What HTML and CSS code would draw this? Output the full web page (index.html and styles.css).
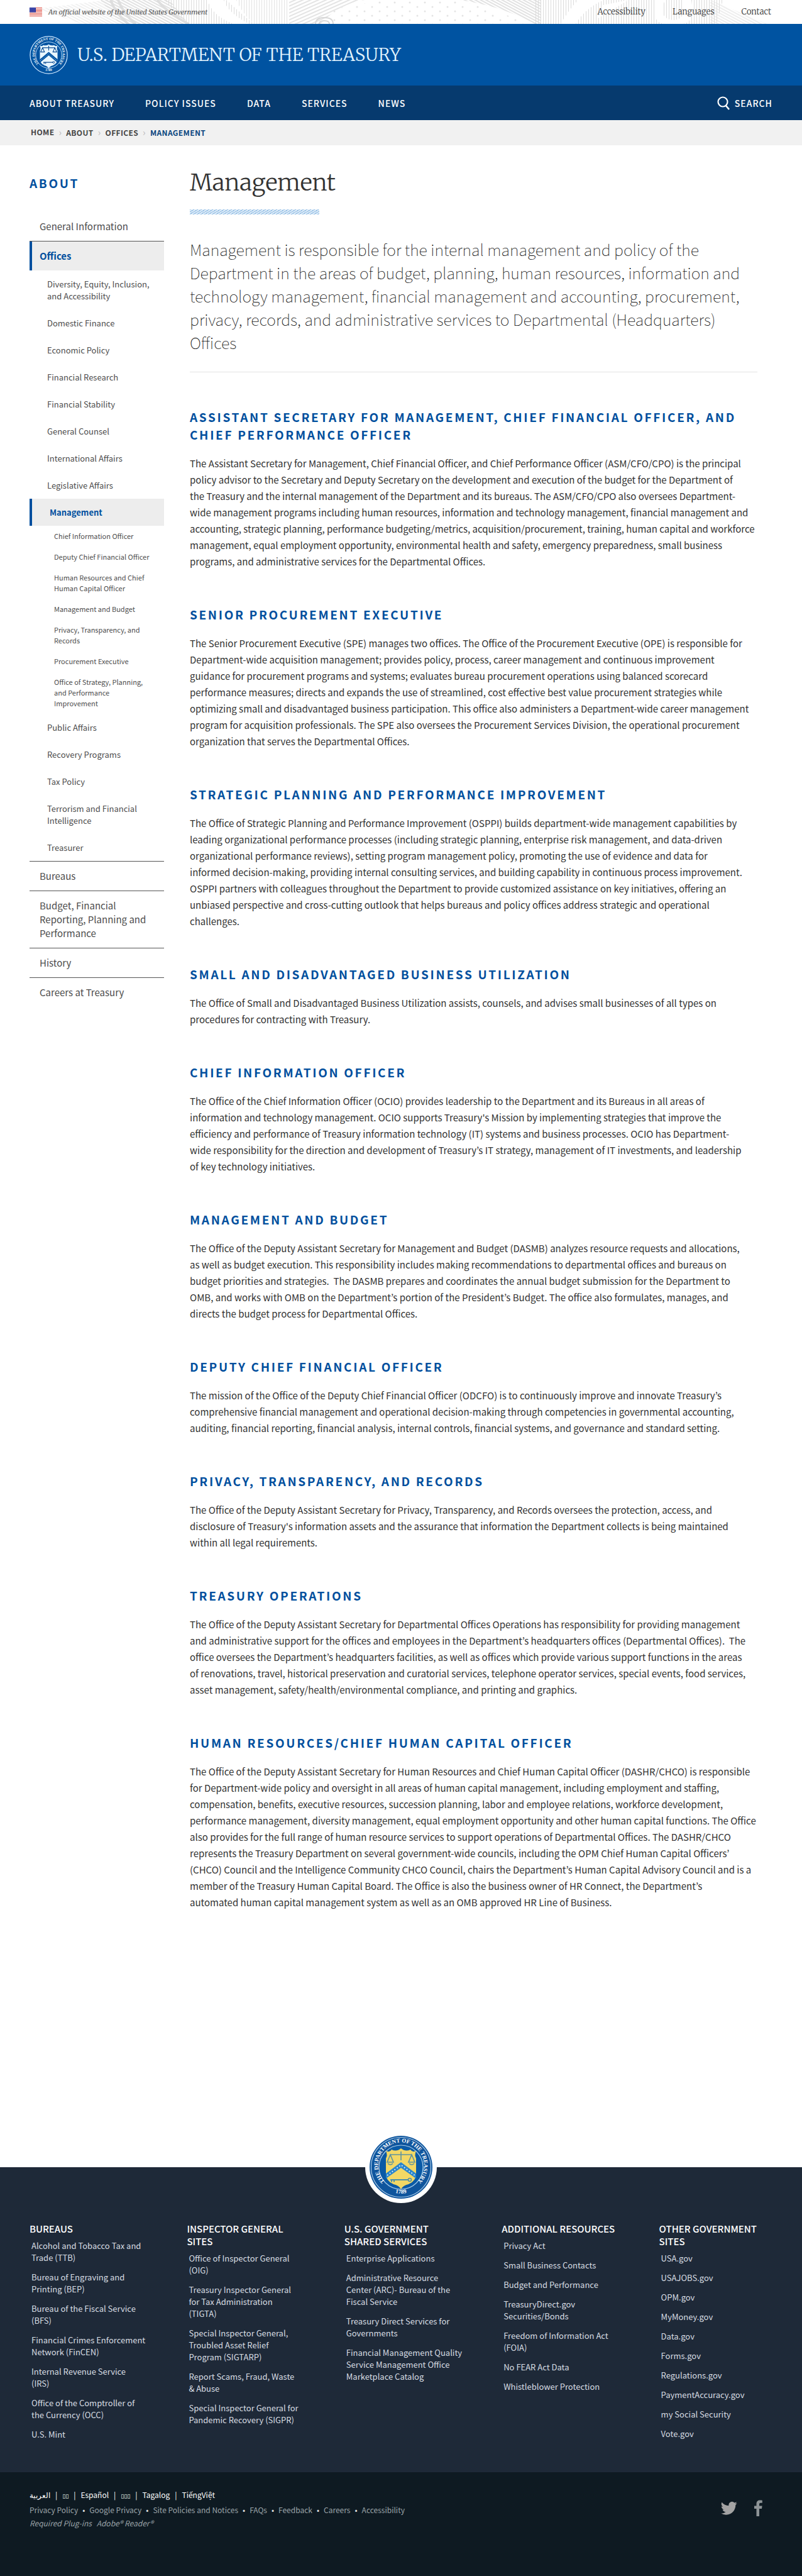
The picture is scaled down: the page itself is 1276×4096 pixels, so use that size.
FILE: index.html
```html
<!DOCTYPE html>
<html lang="en">
<head>
<meta charset="utf-8">
<meta name="viewport" content="width=device-width, initial-scale=1">
<title>Management | U.S. Department of the Treasury</title>
<link rel="stylesheet" href="styles.css">
</head>
<body>
<div class="banner">
  <svg class="banner-art" viewBox="0 0 1276 38" preserveAspectRatio="xMidYMid slice" aria-hidden="true">
    <defs>
      <pattern id="lines" width="4" height="4" patternUnits="userSpaceOnUse"><path d="M0 0v4" stroke="#dcdcdc" stroke-width="2"/></pattern>
      <pattern id="rows" width="4" height="4" patternUnits="userSpaceOnUse" patternTransform="rotate(28)"><path d="M0 1h4" stroke="#e2e2e2" stroke-width="2"/></pattern>
      <pattern id="rays" width="5" height="5" patternUnits="userSpaceOnUse" patternTransform="rotate(-24)"><path d="M0 1h5" stroke="#e4e4e4" stroke-width="2"/></pattern>
      <pattern id="dots" width="24" height="14" patternUnits="userSpaceOnUse"><circle cx="4" cy="4" r="1.5" fill="#e4e4e4"/><circle cx="16" cy="11" r="1.5" fill="#e4e4e4"/></pattern>
    </defs>
    <path d="M60 14L170 0H190V38H130Z" fill="url(#rows)" opacity=".5"/>
    <path d="M160 0H270L300 38H190Z" fill="url(#rows)"/>
    <path d="M176 0Q184 22 204 38M188 0Q196 22 216 38M250 0Q268 22 300 38" fill="none" stroke="#dedede" stroke-width="4"/>
    <path d="M262 0H360Q384 22 404 38H300Q276 20 262 0Z" fill="url(#lines)"/>
    <path d="M330 0Q338 26 372 38H396Q362 20 356 0Z" fill="#fff"/>
    <path d="M376 0H460V38H404Q384 20 376 0Z" fill="url(#lines)" opacity=".8"/>
    <path d="M460 0H580Q540 6 510 38H460Z" fill="url(#rays)"/>
    <path d="M502 38Q502 28 516 28T530 38M508 38Q508 33 516 33T524 38" fill="none" stroke="#d8d8d8" stroke-width="2"/>
    <path d="M530 14L610 0H730L850 38H520Z" fill="url(#dots)"/>
    <path d="M732 0H860V38H850Q800 10 732 0Z" fill="url(#rows)"/>
    <path d="M850 0H1150L1140 38H850Z" fill="url(#lines)"/>
    <path d="M920 0H960Q930 14 916 38H892Q906 14 920 0ZM960 8L1000 0L950 30ZM1058 0Q1046 30 1072 32Q1094 30 1086 0H1100Q1106 38 1084 38H1060Q1034 38 1044 0Z" fill="#fff"/>
    <path d="M1130 0L1220 38H1130Z" fill="url(#rows)" opacity=".6"/>
  </svg>
  <div class="wrap banner-row">
    <p class="official">
      <svg class="flag" viewBox="0 0 20 14" aria-hidden="true"><path fill="#fff" d="M0 0h20v14H0z"/><path stroke="#e0564a" stroke-width="1.1" d="M0 .5h20M0 2.7h20M0 4.9h20M0 7h20M0 9.2h20M0 11.3h20M0 13.5h20"/><path fill="#25319b" d="M0 0h10v7.6H0z"/><path stroke="#aab0e8" stroke-width=".8" stroke-dasharray="1 1.2" d="M1 1.6h8.5M1 3.8h8.5M1 6h8.5"/></svg>
      An official website of the United States Government
    </p>
    <nav class="utility" aria-label="Utility">
      <a href="#">Accessibility</a><a href="#">Languages</a><a href="#">Contact</a>
    </nav>
  </div>
</div>
<header class="masthead">
  <div class="wrap masthead-row">
    <svg class="logo" viewBox="0 0 100 100" role="img" aria-label="Treasury seal">
      <circle cx="50" cy="50" r="48.5" fill="none" stroke="#cfe8ff" stroke-width="2"/>
      <circle cx="50" cy="50" r="34" fill="none" stroke="#cfe8ff" stroke-width="1.5"/>
      <path id="arc-a" d="M22.5 71A36.5 36.5 0 1 1 77.5 71" fill="none"/>
      <path id="arc-b" d="M25 84A43.5 43.5 0 0 0 75 84" fill="none"/>
      <text class="seal-text"><textPath href="#arc-a" startOffset="50%" text-anchor="middle">THE DEPARTMENT OF THE TREASURY</textPath></text>
      <text class="seal-text"><textPath href="#arc-b" startOffset="50%" text-anchor="middle">1789</textPath></text>
      <path fill="#e8f6ff" d="M27 26q6 2 9-2q7 3 14-2q7 5 14 2q3 4 9 2q-3 7 0 12v22q0 12-12 17q-8 2-11 8q-3-6-11-8q-12-5-12-17V38q3-5 0-12z"/>
      <path fill="none" stroke="#0a4a90" stroke-width="1.8" d="M50 26v12M34 31h32M34 31l-5 11h10zM66 31l-5 11h10z"/>
      <path fill="#0053a1" d="M27 61L50 42l23 19v9L50 51 27 70z"/>
      <path fill="none" stroke="#cfe8ff" stroke-width="1.6" stroke-dasharray="1.6 3" d="M28 65L50 47l22 18"/>
      <path fill="none" stroke="#0a4a90" stroke-width="2" d="M36 69h26M38 69v4M42 69v4"/><circle cx="63" cy="69" r="2.5" fill="none" stroke="#0a4a90" stroke-width="1.5"/>
    </svg>
    <a class="site-name" href="#">U.S. DEPARTMENT OF THE TREASURY</a>
  </div>
</header>
<div class="mainnav">
  <div class="wrap mainnav-row">
    <nav class="menu" aria-label="Main">
      <a href="#">ABOUT TREASURY</a><a href="#">POLICY ISSUES</a><a href="#">DATA</a><a href="#">SERVICES</a><a href="#">NEWS</a>
    </nav>
    <button class="search" type="button">
      <svg viewBox="0 0 20 22" aria-hidden="true"><circle cx="9" cy="9" r="7.5" fill="none" stroke="#fff" stroke-width="2.2"/><path d="M13.5 14.5l5.5 6.5" stroke="#fff" stroke-width="2.6"/></svg>
      SEARCH
    </button>
  </div>
</div>
<nav class="crumbs" aria-label="Breadcrumb">
  <ol class="wrap crumbs-row">
    <li><a href="#">HOME</a></li><li><a href="#">ABOUT</a></li><li><a href="#">OFFICES</a></li><li><a href="#" aria-current="page">MANAGEMENT</a></li>
  </ol>
</nav>
<div class="wrap content">
  <aside class="sidebar">
    <h2 class="side-title">ABOUT</h2>
    <ul class="l1">
      <li><a href="#">General Information</a></li>
      <li><a class="active" href="#">Offices</a>
        <ul class="l2">
          <li><a href="#">Diversity, Equity, Inclusion, and Accessibility</a></li>
          <li><a href="#">Domestic Finance</a></li>
          <li><a href="#">Economic Policy</a></li>
          <li><a href="#">Financial Research</a></li>
          <li><a href="#">Financial Stability</a></li>
          <li><a href="#">General Counsel</a></li>
          <li><a href="#">International Affairs</a></li>
          <li><a href="#">Legislative Affairs</a></li>
          <li><a class="active" href="#">Management</a>
            <ul class="l3">
              <li><a href="#">Chief Information Officer</a></li>
              <li><a href="#">Deputy Chief Financial Officer</a></li>
              <li><a href="#">Human Resources and Chief Human Capital Officer</a></li>
              <li><a href="#">Management and Budget</a></li>
              <li><a href="#">Privacy, Transparency, and Records</a></li>
              <li><a href="#">Procurement Executive</a></li>
              <li><a href="#">Office of Strategy, Planning, and Performance Improvement</a></li>
            </ul>
          </li>
          <li><a href="#">Public Affairs</a></li>
          <li><a href="#">Recovery Programs</a></li>
          <li><a href="#">Tax Policy</a></li>
          <li><a href="#">Terrorism and Financial Intelligence</a></li>
          <li><a href="#">Treasurer</a></li>
        </ul>
      </li>
      <li><a href="#">Bureaus</a></li>
      <li><a href="#">Budget, Financial Reporting, Planning and Performance</a></li>
      <li><a href="#">History</a></li>
      <li><a href="#">Careers at Treasury</a></li>
    </ul>
  </aside>
  <main class="article">
    <h1>Management</h1>
    <div class="hatch"></div>
    <p class="lead">Management is responsible for the internal management and policy of the Department in the areas of budget, planning, human resources, information and technology management, financial management and accounting, procurement, privacy, records, and administrative services to Departmental (Headquarters) Offices</p>
    <section><h2>ASSISTANT SECRETARY FOR MANAGEMENT, CHIEF FINANCIAL OFFICER, AND CHIEF PERFORMANCE OFFICER</h2>
    <p>The Assistant Secretary for Management, Chief Financial Officer, and Chief Performance Officer (ASM/CFO/CPO) is the principal<br>
    policy advisor to the Secretary and Deputy Secretary on the development and execution of the budget for the Department of<br>
    the Treasury and the internal management of the Department and its bureaus. The ASM/CFO/CPO also oversees Department-<br>
    wide management programs including human resources, information and technology management, financial management and<br>
    accounting, strategic planning, performance budgeting/metrics, acquisition/procurement, training, human capital and workforce<br>
    management, equal employment opportunity, environmental health and safety, emergency preparedness, small business<br>
    programs, and administrative services for the Departmental Offices.</p></section>
    <section><h2>SENIOR PROCUREMENT EXECUTIVE</h2>
    <p>The Senior Procurement Executive (SPE) manages two offices. The Office of the Procurement Executive (OPE) is responsible for<br>
    Department-wide acquisition management; provides policy, process, career management and continuous improvement<br>
    guidance for procurement programs and systems; evaluates bureau procurement operations using balanced scorecard<br>
    performance measures; directs and expands the use of streamlined, cost effective best value procurement strategies while<br>
    optimizing small and disadvantaged business participation. This office also administers a Department-wide career management<br>
    program for acquisition professionals. The SPE also oversees the Procurement Services Division, the operational procurement<br>
    organization that serves the Departmental Offices.</p></section>
    <section><h2>STRATEGIC PLANNING AND PERFORMANCE IMPROVEMENT</h2>
    <p>The Office of Strategic Planning and Performance Improvement (OSPPI) builds department-wide management capabilities by<br>
    leading organizational performance processes (including strategic planning, enterprise risk management, and data-driven<br>
    organizational performance reviews), setting program management policy, promoting the use of evidence and data for<br>
    informed decision-making, providing internal consulting services, and building capability in continuous process improvement.<br>
    OSPPI partners with colleagues throughout the Department to provide customized assistance on key initiatives, offering an<br>
    unbiased perspective and cross-cutting outlook that helps bureaus and policy offices address strategic and operational<br>
    challenges.</p></section>
    <section><h2>SMALL AND DISADVANTAGED BUSINESS UTILIZATION</h2>
    <p>The Office of Small and Disadvantaged Business Utilization assists, counsels, and advises small businesses of all types on<br>
    procedures for contracting with Treasury.</p></section>
    <section><h2>CHIEF INFORMATION OFFICER</h2>
    <p>The Office of the Chief Information Officer (OCIO) provides leadership to the Department and its Bureaus in all areas of<br>
    information and technology management. OCIO supports Treasury's Mission by implementing strategies that improve the<br>
    efficiency and performance of Treasury information technology (IT) systems and business processes. OCIO has Department-<br>
    wide responsibility for the direction and development of Treasury’s IT strategy, management of IT investments, and leadership<br>
    of key technology initiatives.</p></section>
    <section><h2>MANAGEMENT AND BUDGET</h2>
    <p>The Office of the Deputy Assistant Secretary for Management and Budget (DASMB) analyzes resource requests and allocations,<br>
    as well as budget execution. This responsibility includes making recommendations to departmental offices and bureaus on<br>
    budget priorities and strategies.&nbsp; The DASMB prepares and coordinates the annual budget submission for the Department to<br>
    OMB, and works with OMB on the Department’s portion of the President’s Budget. The office also formulates, manages, and<br>
    directs the budget process for Departmental Offices.</p></section>
    <section><h2>DEPUTY CHIEF FINANCIAL OFFICER</h2>
    <p>The mission of the Office of the Deputy Chief Financial Officer (ODCFO) is to continuously improve and innovate Treasury’s<br>
    comprehensive financial management and operational decision-making through competencies in governmental accounting,<br>
    auditing, financial reporting, financial analysis, internal controls, financial systems, and governance and standard setting.</p></section>
    <section><h2>PRIVACY, TRANSPARENCY, AND RECORDS</h2>
    <p>The Office of the Deputy Assistant Secretary for Privacy, Transparency, and Records oversees the protection, access, and<br>
    disclosure of Treasury's information assets and the assurance that information the Department collects is being maintained<br>
    within all legal requirements.</p></section>
    <section><h2>TREASURY OPERATIONS</h2>
    <p>The Office of the Deputy Assistant Secretary for Departmental Offices Operations has responsibility for providing management<br>
    and administrative support for the offices and employees in the Department’s headquarters offices (Departmental Offices).&nbsp; The<br>
    office oversees the Department’s headquarters facilities, as well as offices which provide various support functions in the areas<br>
    of renovations, travel, historical preservation and curatorial services, telephone operator services, special events, food services,<br>
    asset management, safety/health/environmental compliance, and printing and graphics.</p></section>
    <section><h2>HUMAN RESOURCES/CHIEF HUMAN CAPITAL OFFICER</h2>
    <p>The Office of the Deputy Assistant Secretary for Human Resources and Chief Human Capital Officer (DASHR/CHCO) is responsible<br>
    for Department-wide policy and oversight in all areas of human capital management, including employment and staffing,<br>
    compensation, benefits, executive resources, succession planning, labor and employee relations, workforce development,<br>
    performance management, diversity management, equal employment opportunity and other human capital functions. The Office<br>
    also provides for the full range of human resource services to support operations of Departmental Offices. The DASHR/CHCO<br>
    represents the Treasury Department on several government-wide councils, including the OPM Chief Human Capital Officers’<br>
    (CHCO) Council and the Intelligence Community CHCO Council, chairs the Department’s Human Capital Advisory Council and is a<br>
    member of the Treasury Human Capital Board. The Office is also the business owner of HR Connect, the Department’s<br>
    automated human capital management system as well as an OMB approved HR Line of Business.</p></section>
  </main>
</div>
<footer class="footer">
  <div class="badge">
    <svg viewBox="0 0 100 100" role="img" aria-label="Treasury seal">
      <circle cx="50" cy="50" r="50" fill="#0f559d"/>
      <circle cx="50" cy="50" r="47.5" fill="none" stroke="#a9cbe8" stroke-width="1.2"/>
      <circle cx="50" cy="50" r="35" fill="#0a5aa6" stroke="#a9cbe8" stroke-width="1.2"/>
      <text class="seal-text"><textPath href="#arc-a" startOffset="50%" text-anchor="middle">THE DEPARTMENT OF THE TREASURY</textPath></text>
      <text class="seal-text"><textPath href="#arc-b" startOffset="50%" text-anchor="middle">1789</textPath></text>
      <path fill="#f2d865" d="M26 24q6 3 9-2q8 4 15-2q7 6 15 2q3 5 9 2q-3 7 0 12v24q0 12-12 17q-9 2-12 8q-3-6-12-8q-12-5-12-17V36q3-5 0-12z"/>
      <path fill="none" stroke="#5d93a0" stroke-width="1.6" d="M50 25v14M33 30h34M33 30l-5 12h10zM67 30l-5 12h10zM29 44q4 4 8 0M63 44q4 4 8 0"/>
      <path fill="#2a86cc" d="M26 60L50 42l24 18v8L50 51 26 68z"/>
      <path fill="none" stroke="#e6f2fb" stroke-width="1.8" stroke-dasharray="1.8 3" d="M28 63L50 46.5l22 16.5"/>
      <path fill="none" stroke="#4e8fa6" stroke-width="2" d="M33 70h28M35 70v3.5M39 70v3.5"/><circle cx="64" cy="70" r="2.5" fill="none" stroke="#4e8fa6" stroke-width="1.5"/>
    </svg>
  </div>
  <div class="wrap columns">
    <section><h2>BUREAUS</h2><ul>
      <li><a href="#">Alcohol and Tobacco Tax and Trade (TTB)</a></li>
      <li><a href="#">Bureau of Engraving and Printing (BEP)</a></li>
      <li><a href="#">Bureau of the Fiscal Service (BFS)</a></li>
      <li><a href="#">Financial Crimes Enforcement Network (FinCEN)</a></li>
      <li><a href="#">Internal Revenue Service<br>(IRS)</a></li>
      <li><a href="#">Office of the Comptroller of<br>the Currency (OCC)</a></li>
      <li><a href="#">U.S. Mint</a></li></ul></section>
    <section><h2>INSPECTOR GENERAL<br>SITES</h2><ul>
      <li><a href="#">Office of Inspector General<br>(OIG)</a></li>
      <li><a href="#">Treasury Inspector General<br>for Tax Administration<br>(TIGTA)</a></li>
      <li><a href="#">Special Inspector General,<br>Troubled Asset Relief<br>Program (SIGTARP)</a></li>
      <li><a href="#">Report Scams, Fraud, Waste<br>&amp; Abuse</a></li>
      <li><a href="#">Special Inspector General for Pandemic Recovery (SIGPR)</a></li></ul></section>
    <section><h2>U.S. GOVERNMENT<br>SHARED SERVICES</h2><ul>
      <li><a href="#">Enterprise Applications</a></li>
      <li><a href="#">Administrative Resource<br>Center (ARC)- Bureau of the<br>Fiscal Service</a></li>
      <li><a href="#">Treasury Direct Services for Governments</a></li>
      <li><a href="#">Financial Management Quality<br>Service Management Office<br>Marketplace Catalog</a></li></ul></section>
    <section><h2>ADDITIONAL RESOURCES</h2><ul>
      <li><a href="#">Privacy Act</a></li>
      <li><a href="#">Small Business Contacts</a></li>
      <li><a href="#">Budget and Performance</a></li>
      <li><a href="#">TreasuryDirect.gov Securities/Bonds</a></li>
      <li><a href="#">Freedom of Information Act (FOIA)</a></li>
      <li><a href="#">No FEAR Act Data</a></li>
      <li><a href="#">Whistleblower Protection</a></li></ul></section>
    <section><h2>OTHER GOVERNMENT<br>SITES</h2><ul>
      <li><a href="#">USA.gov</a></li>
      <li><a href="#">USAJOBS.gov</a></li>
      <li><a href="#">OPM.gov</a></li>
      <li><a href="#">MyMoney.gov</a></li>
      <li><a href="#">Data.gov</a></li>
      <li><a href="#">Forms.gov</a></li>
      <li><a href="#">Regulations.gov</a></li>
      <li><a href="#">PaymentAccuracy.gov</a></li>
      <li><a href="#">my Social Security</a></li>
      <li><a href="#">Vote.gov</a></li></ul></section>
  </div>
</footer>
<div class="legal">
  <div class="wrap legal-row">
    <div>
      <ul class="langs"><li><a href="#" lang="ar">العربية</a></li><li><a class="tofu" href="#">▯▯</a></li><li><a href="#">Español</a></li><li><a class="tofu" href="#">▯▯▯</a></li><li><a href="#">Tagalog</a></li><li><a href="#">TiếngViệt</a></li></ul>
      <ul class="policies"><li><a href="#">Privacy Policy</a></li><li><a href="#">Google Privacy</a></li><li><a href="#">Site Policies and Notices</a></li><li><a href="#">FAQs</a></li><li><a href="#">Feedback</a></li><li><a href="#">Careers</a></li><li><a href="#">Accessibility</a></li></ul>
      <p class="plugins"><a href="#">Required Plug-ins</a> <a href="#">Adobe® Reader®</a></p>
    </div>
    <div class="social">
      <a href="#" aria-label="Twitter"><svg width="26" height="26" viewBox="0 0 24 24"><path fill="#a3a3a3" d="M23.6 4.900c-.9.400-1.800.6-2.800.8 1-.6 1.800-1.500 2.100-2.700-.9.600-2 1-3.100 1.200a4.900 4.900 0 0 0-8.300 4.400C7.400 8.400 3.800 6.500 1.400 3.500a4.800 4.800 0 0 0 1.500 6.500c-.8 0-1.500-.2-2.200-.6v.1c0 2.300 1.700 4.300 3.900 4.700-.7.200-1.500.2-2.200.1.600 1.900 2.400 3.300 4.600 3.400A9.800 9.800 0 0 1 0 19.700a13.800 13.800 0 0 0 7.500 2.200c9 0 14-7.500 14-14v-.6c.8-.7 1.600-1.500 2.100-2.400z"/></svg></a>
      <a href="#" aria-label="Facebook"><svg width="13" height="26" viewBox="0 0 13 26"><path fill="#8d9396" d="M3.500 26V14H0V9.500h3.500V6.300C3.500 2.500 5.700.5 9.200.5c1.700 0 3.100.1 3.600.2v4.100h-2.500c-1.900 0-2.300.9-2.300 2.300v2.400h4.600L12 14H8v12z"/></svg></a>
    </div>
  </div>
</div>
</body>
</html>
```
FILE: styles.css
```css
* { box-sizing: border-box; }
body { margin: 0; background: #fff; color: #333; font: 15px/26px "Noto Sans CJK KR", "Noto Sans", sans-serif; }
h1, h2, p, ul, ol { margin: 0; padding: 0; }
ul, ol { list-style: none; }
a { color: inherit; text-decoration: none; }
svg { display: block; }
.wrap { padding: 0 47px; }

.banner { position: relative; height: 38px; overflow: hidden; }
.banner-art { position: absolute; top: 0; left: 0; width: 100%; height: 100%; }
.banner-row { position: relative; display: flex; justify-content: space-between; align-items: center; height: 100%; font-family: Merriweather, "Noto Serif", serif; font-weight: 300; }
.official { display: flex; align-items: center; gap: 10px; font-size: 11px; font-style: italic; font-weight: 400; line-height: 20px; color: #555; }
.flag { width: 20px; height: 14px; }
.utility { display: flex; gap: 43px; padding-right: 2px; font-size: 13px; line-height: 20px; }

.masthead { background: #0053a1; }
.masthead-row { display: flex; align-items: center; gap: 15px; height: 98px; }
.logo { width: 61px; height: 61px; }
.site-name { color: #e4f5ff; font: 300 28px/40px Merriweather, "Noto Serif", serif; }
.seal-text { font: 700 9px "Liberation Serif", serif; fill: #fff; }

.mainnav { background: #063a6e; color: #fff; font-size: 14px; line-height: 20px; font-weight: 500; letter-spacing: 1px; }
.mainnav-row { display: flex; justify-content: space-between; align-items: center; height: 55px; }
.menu { display: flex; gap: 49px; }
.search { display: flex; align-items: center; gap: 8px; border: 0; padding: 0; background: none; color: inherit; font: inherit; letter-spacing: inherit; }
.search svg { width: 20px; height: 22px; }

.crumbs { background: #f1f1f1; color: #444; font-size: 12px; line-height: 18px; font-weight: 700; letter-spacing: .03em; }
.crumbs-row { display: flex; align-items: center; height: 40px; padding-left: 49px; padding-bottom: 2px; }
.crumbs li + li::before { content: "›"; padding: 0 7px; color: #bbb; font-size: 15px; font-weight: 400; }
.crumbs [aria-current] { color: #0b4680; }

.content { display: grid; grid-template-columns: 214px 1fr; column-gap: 41px; padding-bottom: 351px; }
.sidebar { padding-top: 46px; color: #4d4d4d; }
.side-title, .article h2 { color: #004f9e; font-size: 19px; line-height: 28px; font-weight: 700; letter-spacing: .14em; }
.side-title { margin-bottom: 32px; }
.l1 > li + li { border-top: 1px solid #555; }
.l1 a { display: block; padding: 12px 18px 12px 16px; font-size: 15px; line-height: 22px; }
.l1 .l2 a { padding-left: 28px; font-size: 13px; line-height: 19px; }
.l1 .l3 a { padding: 8px 18px 8px 39px; font-size: 11px; line-height: 17px; }
.l1 a.active { border-left: 4px solid #004f9e; padding-left: 12px; background: #ededed; color: #004f9e; font-weight: 700; }
.l1 .l2 a.active { padding-left: 28px; }

.article { padding: 31px 24px 0 0; }
h1 { color: #333; font: 300 37px/56px Merriweather, "Noto Serif", serif; }
.hatch { width: 206px; height: 8px; margin-top: 15px; background: repeating-linear-gradient(150deg, #8fbbe3 0 1px, #dcebf8 1px 3px); }
.lead { padding: 37px 0 28px; margin-bottom: 57px; border-bottom: 1px solid #e2e2e2; color: #111; font-size: 25px; line-height: 37px; font-weight: 100; }
.article section { margin-bottom: 57px; }
.article section h2 { margin-bottom: 19px; }

.footer { position: relative; padding: 88px 0 51px; background: #1e2938; color: #d8dde3; }
.badge { position: absolute; top: -57px; left: 50%; width: 114px; height: 114px; margin-left: -57px; padding: 7px; border-radius: 50%; background: #fff; }
.columns { display: grid; grid-template-columns: repeat(5, 1fr); column-gap: 70px; }
.columns h2 { color: #fff; font-size: 15px; line-height: 20px; font-weight: 500; margin: 0 -8px 7px 0; }
.columns ul { display: grid; gap: 12px; margin-right: -8px; padding-left: 3px; font-size: 13px; line-height: 19px; }
.columns a { display: block; }

.legal { background: #0e1a22; color: #9aa3a8; font-size: 12px; line-height: 21px; }
.legal-row { display: flex; justify-content: space-between; align-items: flex-start; padding-top: 25px; padding-bottom: 77px; }
.langs, .policies { display: flex; }
.langs { color: #fff; }
.langs li + li::before { content: "|"; padding: 0 8px; }
.tofu { font-family: "DejaVu Sans", sans-serif; font-size: 9px; }
.policies li + li::before { content: "•"; padding: 0 7px; color: #ddd; }
.plugins { font-style: italic; }
.plugins a { padding-right: 5px; }
.social { display: flex; gap: 27px; padding: 19px 16px 0 0; }
```
